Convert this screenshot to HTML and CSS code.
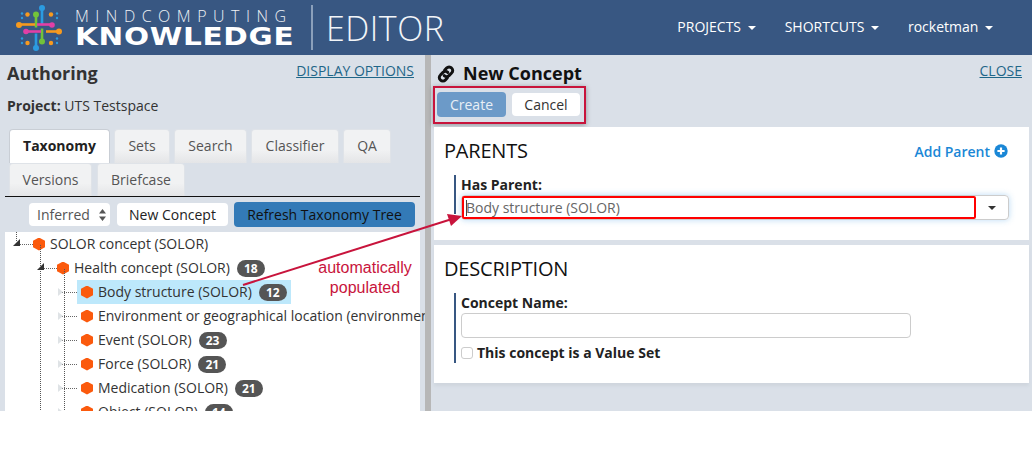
FILE: index.html
```html
<!DOCTYPE html>
<html lang="en">
<head>
<meta charset="utf-8">
<title>Knowledge Editor</title>
<link rel="stylesheet" href="styles.css">
</head>
<body>
<div class="app">
  <header class="topbar">
    <svg class="logo-mark" viewBox="15 3.5 48 48" width="48" height="48" aria-hidden="true">
      <g fill="none" stroke-width="2.6">
        <path d="M42 7V24" stroke="#2b9be0"/><path d="M36 33V48" stroke="#2b9be0"/>
        <path d="M36 14V27" stroke="#72c23a"/><path d="M42 28V41" stroke="#72c23a"/>
        <path d="M19 24H35" stroke="#f79a1e"/><path d="M37 24H52" stroke="#e23fa6"/>
        <path d="M26 31H41" stroke="#e23fa6"/><path d="M46 31H59" stroke="#f79a1e"/>
      </g>
      <g fill="#2b9be0"><circle cx="42" cy="7.5" r="3"/><circle cx="36" cy="47.5" r="3"/><circle cx="22" cy="13" r="1.2"/><circle cx="22" cy="17.500" r="1.2"/><circle cx="57" cy="13" r="1.2"/><circle cx="57" cy="17.500" r="1.2"/><circle cx="22" cy="38" r="1.2"/><circle cx="22" cy="42.500" r="1.2"/><circle cx="57" cy="38" r="1.2"/><circle cx="57" cy="42.500" r="1.2"/></g>
      <g fill="#f79a1e"><circle cx="19" cy="24.500" r="3"/><circle cx="59" cy="31" r="3"/><circle cx="27.500" cy="14" r="2.200"/><circle cx="51" cy="14" r="2.200"/><circle cx="27.500" cy="42.500" r="2.200"/><circle cx="51" cy="42.500" r="2.200"/></g>
      <g fill="#e23fa6"><circle cx="26" cy="31" r="2.800"/><circle cx="52" cy="24.500" r="2.800"/></g>
      <g fill="#72c23a"><circle cx="36" cy="14" r="3"/><circle cx="42" cy="41" r="3"/></g>
    </svg>
    <div class="wordmark">
      <span class="wordmark-top">MINDCOMPUTING</span>
      <span class="wordmark-main">KNOWLEDGE</span>
    </div>
    <span class="logo-rule"></span>
    <span class="product">EDITOR</span>
    <nav class="nav">
      <a class="nav-item">PROJECTS <i class="caret"></i></a>
      <a class="nav-item">SHORTCUTS <i class="caret"></i></a>
      <a class="nav-item">rocketman <i class="caret"></i></a>
    </nav>
  </header>

  <main class="workspace">
    <section class="left">
      <div class="left-head">
        <h2 class="panel-title">Authoring</h2>
        <a class="link">DISPLAY OPTIONS</a>
      </div>
      <p class="project"><b>Project:</b> UTS Testspace</p>
      <div class="tabs">
        <span class="tab active tab-tax">Taxonomy</span>
        <span class="tab tab-sets">Sets</span>
        <span class="tab tab-search">Search</span>
        <span class="tab tab-class">Classifier</span>
        <span class="tab tab-qa">QA</span>
        <span class="tab tab-ver">Versions</span>
        <span class="tab tab-brief">Briefcase</span>
      </div>
      <div class="toolbar">
        <span class="select-like">Inferred
          <svg class="updown" viewBox="0 0 7 12" width="7" height="12" aria-hidden="true"><path d="M3.500 0L7 4.500H0zM3.500 12L0 7.500H7z" fill="#555"/></svg>
        </span>
        <button class="btn btn-new">New Concept</button>
        <button class="btn btn-refresh">Refresh Taxonomy Tree</button>
      </div>
      <div class="tree">
        <div class="node">
          <div class="row lvl0"><i class="twist open"></i><i class="hex"></i><span class="label">SOLOR concept (SOLOR)</span></div>
          <div class="kids kids0">
            <div class="row lvl1"><i class="twist open"></i><i class="hex"></i><span class="label">Health concept (SOLOR)</span><b class="badge">18</b></div>
            <div class="kids kids1">
              <div class="row lvl2 selected"><i class="twist"></i><span class="sel"><i class="hex"></i><span class="label">Body structure (SOLOR)</span><b class="badge">12</b></span></div>
              <div class="row lvl2"><i class="twist"></i><span class="sel"><i class="hex"></i><span class="label">Environment or geographical location (environment / location)</span></span></div>
              <div class="row lvl2"><i class="twist"></i><span class="sel"><i class="hex"></i><span class="label">Event (SOLOR)</span><b class="badge">23</b></span></div>
              <div class="row lvl2"><i class="twist"></i><span class="sel"><i class="hex"></i><span class="label">Force (SOLOR)</span><b class="badge">21</b></span></div>
              <div class="row lvl2"><i class="twist"></i><span class="sel"><i class="hex"></i><span class="label">Medication (SOLOR)</span><b class="badge">21</b></span></div>
              <div class="row lvl2"><i class="twist"></i><span class="sel"><i class="hex"></i><span class="label">Object (SOLOR)</span><b class="badge">14</b></span></div>
            </div>
          </div>
        </div>
      </div>
    </section>

    <div class="splitter"></div>

    <section class="right">
      <div class="right-head">
        <h2 class="panel-title concept-title">
          <svg class="link-icon" viewBox="0 0 18 18" width="18" height="18" aria-hidden="true"><g fill="none" stroke="#111" stroke-width="3" stroke-linecap="round"><path d="M7.600 5.200l2-2.200a3.400 3.400 0 0 1 5 0 3.400 3.400 0 0 1 0 5l-2.600 2.600a3.400 3.400 0 0 1-4.800 0"/><path d="M10.400 12.800l-2 2.200a3.400 3.400 0 0 1-5 0 3.400 3.400 0 0 1 0-5L6 7.400a3.400 3.400 0 0 1 4.800 0"/></g></svg>
          New Concept
        </h2>
        <a class="link">CLOSE</a>
      </div>
      <div class="actions">
        <button class="btn btn-create">Create</button>
        <button class="btn btn-cancel">Cancel</button>
      </div>
      <div class="card card-parents">
        <div class="card-head">
          <h3 class="card-title">PARENTS</h3>
          <a class="add-parent">Add Parent
            <svg viewBox="0 0 14 14" width="14" height="14" aria-hidden="true"><circle cx="7" cy="7" r="6.700" fill="#1a87d6"/><path d="M7 3.400v7.200M3.400 7h7.200" stroke="#fff" stroke-width="2.200"/></svg>
          </a>
        </div>
        <div class="field">
          <label class="field-label">Has Parent:</label>
          <div class="combo">
            <input class="combo-input" type="text" value="Body structure (SOLOR)">
            <i class="text-cursor"></i>
            <span class="combo-btn"><i class="caret dark"></i></span>
          </div>
        </div>
      </div>
      <div class="card card-desc">
        <h3 class="card-title">DESCRIPTION</h3>
        <div class="field field-desc">
          <label class="field-label">Concept Name:</label>
          <input class="text-input" type="text">
          <label class="check"><input class="checkbox" type="checkbox">This concept is a Value Set</label>
        </div>
      </div>
    </section>
  </main>

  <div class="annotation-note">automatically<br>populated</div>
  <svg class="annotation-arrow" viewBox="0 0 1032 452" width="1032" height="452" aria-hidden="true">
    <path d="M243 285L452 219" stroke="#c8143c" stroke-width="2" fill="none"/>
    <path d="M462 216L451 226L447 214z" fill="#c8143c"/>
  </svg>
</div>
</body>
</html>
```
FILE: styles.css
```css
* { box-sizing: border-box; }
html, body { margin: 0; padding: 0; background: #fff; }
body { font-family: "Open Sans", "Liberation Sans", sans-serif; font-size: 14px; color: #333; }
.app { position: relative; width: 1032px; height: 411px; overflow: hidden; background: #dae0e8; }

.topbar { height: 55px; background: #385782; display: flex; align-items: center; padding-left: 15px; color: #fff; }
.logo-mark { flex: none; }
.wordmark { margin: 2px 0 0 12px; width: 222px; display: flex; flex-direction: column; line-height: 1; }
.wordmark-top { font-weight: 300; font-size: 16px; letter-spacing: 6.5px; height: 16px; white-space: nowrap; color: #eef2f6; }
.wordmark-main { font-family: "DejaVu Sans", sans-serif; font-weight: 700; font-size: 25px; letter-spacing: .6px; white-space: nowrap; height: 25px; transform: scaleX(1.18); transform-origin: left center; }
.logo-rule { width: 2px; height: 45px; margin-left: 14px; background: #8ba0bb; }
.product { margin-left: 13px; font-weight: 300; font-size: 34px; line-height: 1; letter-spacing: .5px; width: 120px; color: #f2f5f8; }
.nav { margin-left: auto; display: flex; gap: 29px; padding: 0 39px 2px 0; }
.nav-item { color: #fff; font-size: 14px; white-space: nowrap; }
.caret { display: inline-block; width: 0; height: 0; margin-left: 3px; vertical-align: middle; border-left: 4px solid transparent; border-right: 4px solid transparent; border-top: 4px solid #fff; }
.caret.dark { border-top-color: #333; margin: 0; }

.workspace { display: flex; height: 356px; }
.left { width: 425px; flex: none; overflow: hidden; padding-top: 6px; }
.splitter { width: 6px; flex: none; background: #b7b7b7; }
.right { flex: 1; min-width: 0; }

.left-head { display: flex; justify-content: space-between; height: 25px; padding: 0 11px 0 7px; }
.panel-title { margin: 0; font-size: 18px; line-height: 25px; font-weight: 700; color: #333; }
.link { color: #1f6688; text-decoration: underline; font-size: 14px; line-height: 19px; }
.project { margin: 10px 0 0 7px; line-height: 19px; height: 19px; }

.tabs { display: flex; flex-wrap: wrap; margin-top: 14px; margin-left: 5px; width: 415px; height: 68px; padding-left: 4px; border-bottom: 1px solid #111; align-content: flex-start; }
.tab { height: 34px; margin-right: 4px; padding-bottom: 2px; display: flex; align-items: center; justify-content: center; color: #555; border: 1px solid #dfe3e8; border-bottom: 0; border-radius: 4px 4px 0 0; background: linear-gradient(#f1f2f3 60%, #e4e5e7); }
.tab.active { background: #fff; color: #222; font-weight: 700; border-color: #c9ced5; }
.tab-tax { width: 101px; }
.tab-sets { width: 56px; }
.tab-search { width: 73px; }
.tab-class { width: 88px; }
.tab-qa { width: 48px; }
.tab-ver { width: 83px; margin-right: 5px; height: 33px; }
.tab-brief { width: 88px; height: 33px; }

.toolbar { display: flex; align-items: center; height: 25px; margin-top: 5px; padding-left: 29px; }
.select-like { width: 81px; height: 23px; padding: 0 4px 0 8px; margin-right: 7px; background: #fff; border-radius: 4px; color: #555; display: flex; align-items: center; justify-content: space-between; }
.btn { font-family: inherit; font-size: 14px; border: 1px solid transparent; border-radius: 4px; padding: 0; }
.btn-new { width: 111px; height: 23px; background: #fff; color: #222; margin-right: 6px; }
.btn-refresh { width: 181px; height: 25px; background: #337ab7; color: #111; }

.tree { margin: 5px 0 0 5px; width: 415px; height: 180px; background: #fff; position: relative; }
.row { height: 24px; display: flex; align-items: center; white-space: nowrap; color: #333; }
.label { margin-bottom: 2px; }
.lvl0 { padding-left: 12px; }
.lvl1 { padding-left: 36px; }
.lvl2 { padding-left: 56px; }
.twist { flex: none; width: 16px; height: 1px; border-top: 1px dotted #666; position: relative; }
.twist::before { content: ""; position: absolute; left: -3px; top: -5px; width: 0; height: 0; border-top: 4px solid transparent; border-bottom: 4px solid transparent; border-left: 5px solid #dfe3e6; }
.twist.open::before { left: -4px; top: -6px; border-top: 0; border-left: 7px solid transparent; border-bottom: 7px solid #333; }
.hex { flex: none; display: block; width: 12px; height: 13px; margin-right: 5px; background: #fb5a0d; clip-path: polygon(50% 0, 100% 25%, 100% 75%, 50% 100%, 0 75%, 0 25%); }
.sel { display: flex; align-items: center; height: 24px; padding-left: 4px; }
.selected .sel { width: 214px; background: #bde8fb; }
.badge { margin-left: 7px; min-width: 28px; height: 17px; padding: 0 7px; border-radius: 9px; background: #555; color: #fff; font-size: 12px; line-height: 17px; text-align: center; }
.kids { position: relative; }
.kids::before { content: ""; position: absolute; top: -11px; bottom: 0; border-left: 1px dotted #555; }
.kids0::before { left: 35px; }
.kids1::before { left: 59px; }
.node { position: relative; }
.node::before { content: ""; position: absolute; left: 11px; top: 0; height: 9px; border-left: 1px dotted #555; }

.right-head { display: flex; justify-content: space-between; height: 31px; padding: 5px 10px 0 6px; }
.concept-title { color: #111; display: flex; align-items: center; gap: 8px; height: 25px; margin-top: 1px; }
.right-head .link { margin-top: 1px; }
.actions { margin: 0 0 3px 2px; width: 153px; height: 38px; border: 2px solid #c8143c; box-shadow: 0 1px 5px rgba(0,0,0,.35); display: flex; align-items: center; padding: 0 0 2px 2px; gap: 6px; }
.btn-create { width: 69px; height: 25px; background: #6c9ac8; color: #e8eff6; }
.btn-cancel { width: 68px; height: 23px; background: #fff; color: #333; }

.card { margin-left: 3px; width: 595px; background: #fff; }
.card-parents { height: 113px; padding: 10px 21px 0 10px; }
.card-desc { height: 138px; margin-top: 5px; padding: 10px 10px 0 10px; box-shadow: 0 3px 3px #cfd6de; }
.card-head { display: flex; justify-content: space-between; align-items: center; height: 28px; }
.card-title { margin: 0; font-size: 20px; font-weight: 400; line-height: 28px; color: #111; letter-spacing: -.2px; }
.add-parent { display: flex; align-items: center; gap: 4px; color: #1a87d6; font-weight: 600; font-size: 14px; }
.field { margin: 10px 0 0 10px; border-left: 2px solid #385782; padding-left: 5px; }
.card-parents .field { height: 39px; }
.field-desc { height: 70px; }
.field-label { display: block; font-weight: 700; color: #222; line-height: 19px; height: 20px; }
.combo { position: relative; display: flex; height: 25px; border: 1px solid #ccc; border-radius: 4px; width: 548px; box-shadow: 0 0 6px rgba(102,175,233,.45); }
.combo-input { flex: none; width: 514px; height: 23px; border: 2px solid #f00; font: inherit; color: #666; padding: 0 0 0 2px; outline: 0; background: #fff; border-radius: 2px; }
.text-cursor { position: absolute; left: 4px; top: 4px; width: 1px; height: 16px; background: #444; }
.combo-btn { flex: 1; display: flex; align-items: center; justify-content: center; }
.text-input { display: block; width: 450px; height: 25px; border: 1px solid #ccc; border-radius: 4px; background: #fff; }
.check { display: flex; align-items: center; font-weight: 700; color: #222; height: 19px; margin-top: 5px; }
.checkbox { appearance: none; width: 12px; height: 12px; margin: 0 4px 0 0; border: 1px solid #ccc; border-radius: 3px; background: #fff; }

.annotation-note { position: absolute; left: 300px; top: 258px; width: 130px; text-align: center; font-family: "Liberation Sans", sans-serif; font-size: 16px; line-height: 20px; color: #c8143c; }
.annotation-arrow { position: absolute; left: 0; top: 0; pointer-events: none; }
```
